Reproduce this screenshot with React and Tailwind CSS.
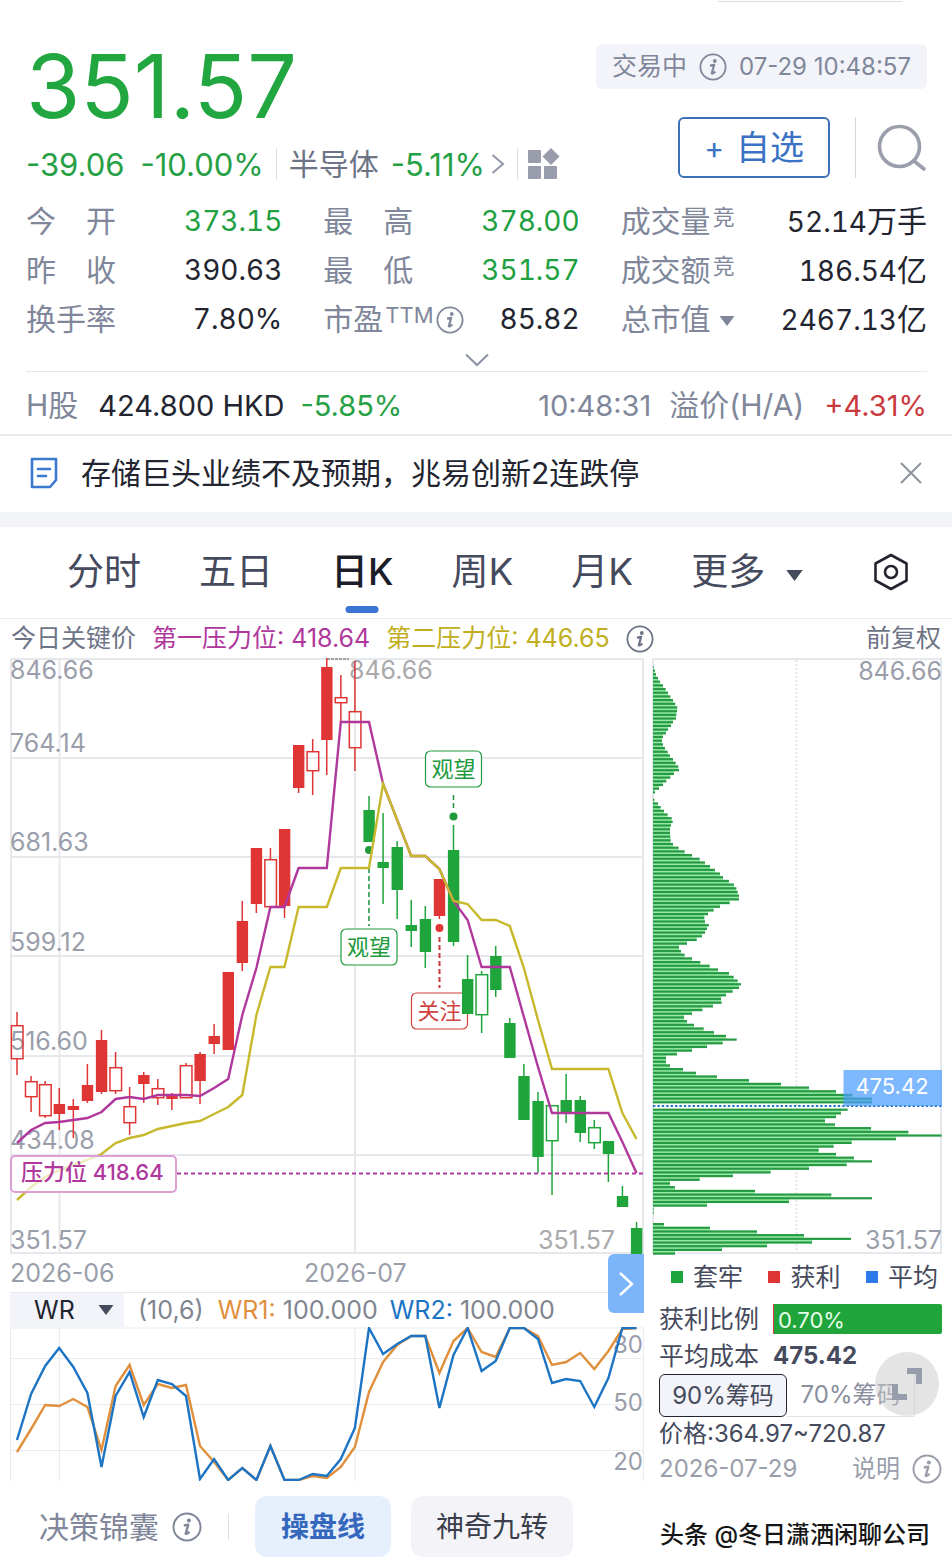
import React, { useState } from 'react';

const GREEN = '#20a53c';
const RED = '#e03535';
const PURPLE = '#b0389c';
const YELLOW = '#c8b82c';

const tabs = ['分时', '五日', '日K', '周K', '月K'];

// [high, body top, body bottom, low, type]  R/G = filled, r/g = hollow
const candles = [
  [1012, 1025, 1059, 1075, 'r'], [1076, 1081, 1097, 1112, 'r'], [1081, 1084, 1116, 1118, 'r'],
  [1088, 1104, 1114, 1130, 'R'], [1099, 1106, 1110, 1138, 'R'], [1064, 1085, 1101, 1103, 'R'],
  [1030, 1040, 1092, 1094, 'R'], [1052, 1067, 1091, 1094, 'r'], [1087, 1106, 1123, 1135, 'r'],
  [1072, 1075, 1084, 1103, 'R'], [1079, 1088, 1098, 1105, 'r'], [1093, 1095, 1099, 1110, 'R'],
  [1063, 1065, 1098, 1098, 'r'], [1052, 1054, 1081, 1104, 'R'], [1024, 1036, 1044, 1054, 'R'],
  [972, 972, 1050, 1050, 'R'], [901, 921, 963, 971, 'R'], [848, 848, 904, 913, 'R'],
  [848, 859, 907, 907, 'r'], [829, 829, 906, 918, 'R'], [745, 745, 788, 793, 'R'],
  [739, 751, 771, 795, 'r'], [658, 667, 740, 775, 'R'], [675, 697, 703, 723, 'r'],
  [661, 711, 748, 771, 'r'], [796, 810, 842, 842, 'G'], [813, 862, 868, 904, 'G'],
  [841, 847, 890, 919, 'G'], [900, 925, 931, 947, 'G'], [906, 919, 952, 968, 'G'],
  [879, 879, 916, 919, 'R'], [825, 850, 942, 946, 'G'], [955, 979, 1014, 1014, 'G'],
  [971, 974, 1015, 1033, 'g'], [946, 956, 990, 997, 'G'], [1018, 1023, 1058, 1058, 'G'],
  [1064, 1076, 1120, 1120, 'G'], [1092, 1101, 1157, 1173, 'G'], [1105, 1105, 1141, 1195, 'g'],
  [1074, 1100, 1112, 1123, 'G'], [1096, 1100, 1133, 1142, 'G'], [1120, 1127, 1143, 1149, 'g'],
  [1141, 1141, 1154, 1182, 'G'], [1186, 1196, 1207, 1207, 'G'], [1222, 1228, 1254, 1254, 'G'],
];

const firstLine = [
  1143, 1130, 1123, 1122, 1120, 1118, 1112, 1099, 1097, 1099, 1095, 1095, 1095, 1096, 1088, 1079,
  1015, 968, 907, 907, 868, 868, 868, 722, 722, 722, 784, 820, 856, 856, 869, 901, 920, 967, 967,
  967, 1017, 1067, 1113, 1113, 1113, 1113, 1113, 1142, 1173,
];
const secondLine = [
  1200, 1187, 1177, 1170, 1165, 1160, 1154, 1143, 1138, 1135, 1129, 1126, 1123, 1121, 1114, 1107,
  1095, 1015, 967, 967, 907, 907, 907, 868, 868, 868, 784, 820, 856, 856, 869, 901, 904, 920, 920,
  926, 968, 1020, 1069, 1069, 1069, 1069, 1069, 1113, 1139,
];

const wr1 = [
  1452, 1429, 1405, 1406, 1399, 1407, 1450, 1386, 1365, 1405, 1384, 1388, 1385, 1446, 1462, 1480,
  1468, 1480, 1446, 1480, 1480, 1476, 1478, 1467, 1447, 1392, 1362, 1345, 1336, 1336, 1373, 1341,
  1328, 1352, 1357, 1328, 1328, 1336, 1365, 1362, 1353, 1369, 1351, 1329, 1328,
];
const wr2 = [
  1440, 1394, 1366, 1348, 1367, 1393, 1467, 1396, 1372, 1417, 1380, 1384, 1396, 1479, 1459, 1480,
  1468, 1480, 1446, 1480, 1480, 1474, 1476, 1459, 1428, 1328, 1354, 1344, 1336, 1336, 1408, 1355,
  1328, 1371, 1361, 1328, 1328, 1339, 1383, 1379, 1381, 1407, 1378, 1328, 1328,
];

// chip distribution, one bar per price step, in thirds of a pixel
const chips = [
  2, 6, 9, 15, 21, 30, 38, 45, 52, 60, 67, 73, 72, 70, 69, 60, 54, 45, 39, 30, 27, 30, 36, 44, 51,
  60, 68, 76, 78, 63, 52, 40, 30, 18, 6, 0, 4, 15, 23, 33, 44, 56, 59, 54, 51, 51, 52, 53, 60, 77,
  95, 117, 140, 156, 171, 186, 201, 210, 228, 243, 250, 254, 258, 258, 230, 201, 182, 165, 154, 156,
  168, 162, 156, 147, 131, 102, 78, 84, 95, 117, 142, 170, 195, 228, 242, 254, 264, 258, 239, 219,
  204, 206, 180, 148, 117, 93, 102, 123, 152, 183, 219, 251, 209, 162, 117, 72, 39, 39, 51, 90, 129,
  192, 288, 384, 468, 549, 598, 657, 657, 0, 584, 564, 549, 516, 546, 654, 766, 866, 729, 596, 542,
  497, 549, 603, 657, 581, 468, 353, 240, 140, 51, 66, 306, 535, 657, 408, 162, 2, 2, 0, 0, 33, 171,
  312, 453, 594, 477, 342, 207, 66,
];

const xAt = (i) => 17 + i * 14.08;
const toPoints = (values) => values.map((y, i) => `${xAt(i).toFixed(1)},${y}`).join(' ');

const InfoIcon = ({ size = 'size-7' }) => (
  <svg viewBox="0 0 28 28" className={`${size} shrink-0`} fill="none" stroke="currentColor" aria-hidden="true">
    <circle cx="14" cy="14" r="12.6" strokeWidth="1.8" />
    <circle cx="15.8" cy="8" r="1.9" fill="currentColor" stroke="none" />
    <path d="M11 12.6 L15.2 11.8 L12.8 20.2 Q13.2 21 16.4 18.6" strokeWidth="2.2" strokeLinejoin="round" />
  </svg>
);

const Caret = ({ className }) => (
  <svg viewBox="0 0 16 10" className={className} fill="currentColor" aria-hidden="true">
    <path d="M0.5 0h15L8 10z" />
  </svg>
);

const Stat = ({ label, spread, sup, info, caret, value, unit, green }) => (
  <div className="flex h-[49px] items-center justify-between">
    <dt className="flex items-center text-[30px] text-[#80879a]">
      {spread ? (
        <span className="flex w-[90px] justify-between">
          <span>{label[0]}</span>
          <span>{label[1]}</span>
        </span>
      ) : (
        <span>{label}</span>
      )}
      {sup && <span className="pb-2 pl-0.5 text-[22px] proportional-nums">{sup}</span>}
      {info && <span className="ml-0.5 pt-0.5"><InfoIcon /></span>}
      {caret && (
        <button aria-label="切换市值" className="ml-2 pt-1">
          <Caret className="h-3 w-4" />
        </button>
      )}
    </dt>
    <dd className={`text-[28px] ${green ? 'text-[#20a040]' : 'text-[#22252f]'}`}>
      {value}
      {unit && <span className="text-[30px]">{unit}</span>}
    </dd>
  </div>
);

const Header = () => (
  <header className="pr-[25px] pl-[26px]">
    <div className="mr-6 ml-auto h-0.5 w-[186px] rounded-b-full border-b border-[#dcdde2]" />
    <div className="flex items-start justify-between pt-[42px]">
      <div>
        <p className="text-[88px] leading-[84px] text-[#22a63f]">351.57</p>
        <div className="mt-4 flex h-10 items-center text-[31px] text-[#26a045]">
          <span>-39.06</span>
          <span className="ml-4">-10.00%</span>
          <span className="mx-3 h-8 w-px bg-[#dcdfe6]" />
          <a href="#sector" className="flex items-center">
            <span className="text-[30px] text-[#6d7486]">半导体</span>
            <span className="ml-3">-5.11%</span>
            <svg viewBox="0 0 14 24" className="ml-1.5 h-6 w-3.5" fill="none" stroke="#9398a8" strokeWidth="2">
              <path d="M1.5 3 L12 12 L1.5 21" />
            </svg>
          </a>
          <span className="mr-2.5 ml-3 h-8 w-px bg-[#dcdfe6]" />
          <button aria-label="板块">
            <svg viewBox="0 0 32 32" className="size-8" fill="#989cab">
              <rect x="0" y="2" width="13" height="13" rx="1" />
              <rect x="0" y="18" width="13" height="13" rx="1" />
              <rect x="16" y="18" width="13" height="13" rx="1" />
              <path d="M23 0 L31.5 8.5 L23 17 L14.5 8.5z" />
            </svg>
          </button>
        </div>
      </div>
      <div className="flex flex-col items-end">
        <div className="flex h-[45px] items-center gap-3 rounded-md bg-[#f3f4f9] px-4 text-[24px] text-[#80879a]">
          <span className="text-[25px]">交易中</span>
          <InfoIcon />
          <span>07-29 10:48:57</span>
        </div>
        <div className="mt-7 flex items-center">
          <button className="flex h-[61px] items-center gap-3 rounded-md border-2 border-[#3d72b8] px-6 text-[34px] text-[#3a72c4]">
            <span className="text-[30px]">+</span>
            <span>自选</span>
          </button>
          <span className="mr-[21px] ml-[25px] h-[61px] w-px bg-[#d5d7dd]" />
          <button aria-label="搜索">
            <svg viewBox="0 0 50 48" className="h-12 w-[50px]" fill="none" stroke="#9b9eab" strokeWidth="3.6" strokeLinecap="round">
              <circle cx="22.5" cy="22.5" r="20" />
              <path d="M37 37 L47 45" />
            </svg>
          </button>
        </div>
      </div>
    </div>

    <dl className="mt-3 grid grid-cols-[256fr_256fr_306fr] gap-x-[41px] tabular-nums">
      <Stat label="今开" spread value="373.15" green />
      <Stat label="最高" spread value="378.00" green />
      <Stat label="成交量" sup="竞" value="52.14" unit="万手" />
      <Stat label="昨收" spread value="390.63" />
      <Stat label="最低" spread value="351.57" green />
      <Stat label="成交额" sup="竞" value="186.54" unit="亿" />
      <Stat label="换手率" value="7.80%" />
      <Stat label="市盈" sup="TTM" info value="85.82" />
      <Stat label="总市值" caret value="2467.13" unit="亿" />
    </dl>
    <button aria-label="展开" className="flex h-[29px] w-full items-end justify-center border-b border-[#e6e7eb] pb-1">
      <svg viewBox="0 0 24 14" className="h-3.5 w-6" fill="none" stroke="#8d92a2" strokeWidth="2">
        <path d="M1 1.5 L12 12 L23 1.5" />
      </svg>
    </button>
    <div className="flex h-[62px] items-center pt-1 text-[29px] text-[#80879a]">
      <span className="text-[30px]">H股</span>
      <span className="ml-5 text-[#22252f]">424.800 HKD</span>
      <span className="ml-4 text-[#26a045]">-5.85%</span>
      <span className="ml-auto">10:48:31</span>
      <span className="ml-[18px] text-[30px]">溢价(H/A)</span>
      <span className="ml-5 text-[#c93a3f]">+4.31%</span>
    </div>
  </header>
);

const NewsBar = () => (
  <div className="flex h-[78px] items-center border-t-2 border-[#e8e9ed] pr-7 pb-0.5 pl-[29px]">
    <svg viewBox="0 0 30 32" className="h-8 w-[30px]" fill="none" stroke="#3b78d0" strokeWidth="2.6" strokeLinecap="round">
      <path d="M3 2h24v21l-6 7H3z" strokeLinejoin="round" />
      <path d="M9 12h12M9 19h8" />
    </svg>
    <a href="#news" className="ml-[22px] text-[30px] text-[#22252f]">存储巨头业绩不及预期，兆易创新2连跌停</a>
    <button aria-label="关闭" className="ml-auto">
      <svg viewBox="0 0 26 26" className="size-[26px]" fill="none" stroke="#8f93a0" strokeWidth="2">
        <path d="M3 3l20 20M23 3L3 23" />
      </svg>
    </button>
  </div>
);

const TabBar = () => {
  const [active, setActive] = useState('日K');
  return (
    <nav className="flex h-[92px] items-center border-b border-[#ececf0] pr-[43px] pb-0.5 pl-[67px] text-[37px] text-[#454a5c]">
      <div className="flex items-center gap-[58px]">
        {tabs.map((tab) => (
          <button
            key={tab}
            onClick={() => setActive(tab)}
            className={`relative leading-[54px] ${tab === active ? 'font-medium text-[#1b1e28]' : ''}`}
          >
            {tab}
            {tab === active && (
              <span className="absolute -bottom-3.5 left-1/2 h-[7px] w-[33px] -translate-x-1/2 rounded-full bg-[#3b75d4]" />
            )}
          </button>
        ))}
        <button className="flex items-center gap-5 leading-[54px]">
          更多
          <Caret className="mt-2 h-[11px] w-[19px]" />
        </button>
      </div>
      <button aria-label="设置" className="ml-auto">
        <svg viewBox="0 0 36 38" className="h-[38px] w-9" fill="none" stroke="#22252f" strokeWidth="2.6" strokeLinejoin="round">
          <path d="M18 2 L33.5 10.5 V27.5 L18 36 L2.5 27.5 V10.5z" />
          <circle cx="18" cy="19" r="6" />
        </svg>
      </button>
    </nav>
  );
};

const Marker = ({ x, y, color, text }) => (
  <g>
    <rect x={x - 28} y={y - 18} width="56" height="36" rx="5" fill="#fff" stroke={color} strokeWidth="1.2" />
    <text x={x} y={y + 8} fontSize="22" textAnchor="middle" fill={color}>{text}</text>
  </g>
);

const Candle = ({ data, index }) => {
  const [high, top, bottom, low, type] = data;
  const color = type.toLowerCase() === 'r' ? RED : GREEN;
  const hollow = type === 'r' || type === 'g';
  const x = xAt(index);
  return (
    <g stroke={color} strokeWidth="1.5">
      <path d={`M${x} ${high}V${top}M${x} ${bottom}V${low}`} />
      {hollow ? (
        <rect x={x - 5.6} y={top + 0.7} width="11.6" height={bottom - top - 1} fill="none" />
      ) : (
        <rect x={x - 5.6} y={top} width="11.4" height={bottom - top} fill={color} stroke="none" />
      )}
    </g>
  );
};

const KLineChart = () => (
  <svg viewBox="10 658 634 596" className="block h-auto w-full overflow-visible" role="img" aria-label="日K线">
    <g stroke="#e7e8eb" strokeWidth="2" fill="none">
      <rect x="11" y="659" width="632" height="594" />
      <path d="M11 758H643M11 857H643M11 956H643M11 1056H643M11 1155H643M59.5 659V1253M355 659V1253" />
    </g>
    <g fontSize="25" fill="#9a9eaa">
      <text x="10" y="679">846.66</text>
      <text x="10" y="752">764.14</text>
      <text x="10" y="851">681.63</text>
      <text x="10" y="951">599.12</text>
      <text x="10" y="1050">516.60</text>
      <text x="10" y="1149">434.08</text>
      <text x="10" y="1249">351.57</text>
      <text x="349" y="679" fill="#a9a9ab">846.66</text>
      <text x="615" y="1249" textAnchor="end" fill="#a9a9ab">351.57</text>
    </g>
    <path d="M327 659H349" stroke="#888" strokeWidth="1.5" strokeDasharray="3 1" />
    <Marker x={439.5} y={1011} color="#d0413f" text="关注" />
    {candles.map((c, i) => (
      <Candle key={i} data={c} index={i} />
    ))}
    <g strokeWidth="1.6" strokeDasharray="5 3">
      <path d="M369 868V926" stroke="#2b9348" />
      <path d="M453.5 795V808" stroke="#2b9348" />
      <path d="M439.5 937V988" stroke="#c93a3f" strokeWidth="2" />
    </g>
    <circle cx="369" cy="850" r="4" fill="#219a3d" />
    <circle cx="453.5" cy="816.5" r="4" fill="#219a3d" />
    <circle cx="439.5" cy="928" r="4" fill={RED} />
    <Marker x={369} y={947} color="#219a3d" text="观望" />
    <Marker x={453.5} y={769} color="#219a3d" text="观望" />
    <polyline points={toPoints(firstLine)} fill="none" stroke={PURPLE} strokeWidth="2.4" />
    <polyline points={toPoints(secondLine)} fill="none" stroke={YELLOW} strokeWidth="2.4" />
    <path d="M177 1173.5H643" stroke={PURPLE} strokeWidth="2" strokeDasharray="4 3" />
    <rect x="11" y="1156" width="165" height="36" rx="4" fill="#fff" fillOpacity="0.7" stroke="#dd9ed3" strokeWidth="2" />
    <text x="21" y="1180" fontSize="22" fontWeight="500" fill={PURPLE}>压力位 418.64</text>
  </svg>
);

const ChipChart = () => (
  <svg viewBox="652 658 290 596" className="block h-auto w-full overflow-visible" role="img" aria-label="筹码分布">
    <rect x="653" y="659" width="288" height="594" fill="none" stroke="#e7e8eb" strokeWidth="2" />
    <path d="M796.5 660V1253" stroke="#dddee3" strokeWidth="1.6" strokeDasharray="2 2" />
    {chips.map((w, i) => (
      <g key={i}>
        <rect x="653" y={667.6 + i * 3.69} width={Math.min(w, chips[i + 1] || 0) / 3} height="2.6" fill="#96e9a6" />
        <rect x="653" y={665.8 + i * 3.69} width={w / 3} height="2.2" fill="#259a43" />
      </g>
    ))}
    <path d="M653 1106H942" stroke="#2476c8" strokeWidth="2" strokeDasharray="2.4 2" />
    <rect x="843.5" y="1070" width="98.5" height="36" fill="#4c9cff" fillOpacity="0.72" />
    <text x="892" y="1094" fontSize="22" textAnchor="middle" fill="#fff">475.42</text>
    <g fontSize="25" fill="#9a9eaa" textAnchor="end">
      <text x="942" y="680">846.66</text>
      <text x="942" y="1249">351.57</text>
    </g>
  </svg>
);

const WrChart = () => (
  <svg viewBox="10 1327 634 154" className="block h-auto w-full" role="img" aria-label="WR">
    <path
      d="M10.5 1481V1328H643.5V1481M11 1358.5H643M11 1404.5H643M11 1450.5H643M59.5 1328V1481M355 1328V1481"
      fill="none"
      stroke="#eaebee"
      strokeWidth="1.2"
    />
    <g fontSize="24" fill="#9a9eaa" textAnchor="end">
      <text x="643" y="1353">80</text>
      <text x="643" y="1411">50</text>
      <text x="643" y="1470">20</text>
    </g>
    <polyline points={toPoints(wr1)} fill="none" stroke="#e0903c" strokeWidth="2.4" />
    <polyline points={toPoints(wr2)} fill="none" stroke="#1c74c4" strokeWidth="2.4" />
  </svg>
);

const LeftPanel = () => (
  <div className="min-w-0 flex-[634]">
    <KLineChart />
    <div className="relative flex h-[38px] items-center text-[25px] text-[#9a9eaa]">
      <span className="flex-[294]">2026-06</span>
      <span className="flex-[340]">2026-07</span>
      <button aria-label="下一页" className="absolute top-0 right-0 flex h-[59px] w-9 items-center justify-center rounded-l-md bg-[#7db5fb]">
        <svg viewBox="0 0 16 26" className="h-[26px] w-4" fill="none" stroke="#fff" strokeWidth="2.4">
          <path d="M2 2 L14 13 L2 24" />
        </svg>
      </button>
    </div>
    <div className="flex h-[35px] items-center border-t border-[#e7e8eb] text-[25px] text-[#80858f]">
      <label className="relative flex h-full w-[114px] items-center bg-[#f3f4f9] text-[#22252f]">
        <select aria-label="指标" className="h-full w-full appearance-none pl-6">
          <option>WR</option>
        </select>
        <Caret className="pointer-events-none absolute right-2.5 h-2.5 w-4 text-[#454a5c]" />
      </label>
      <span className="ml-[14px]">(10,6)</span>
      <span className="ml-[14px]"><span className="text-[#e0903c]">WR1:</span> 100.000</span>
      <span className="ml-3"><span className="text-[#1c74c4]">WR2:</span> 100.000</span>
    </div>
    <WrChart />
  </div>
);

const RightPanel = () => (
  <div className="min-w-0 flex-[290] text-[25px] text-[#454a5c]">
    <ChipChart />
    <div className="flex h-[46px] items-center justify-between pr-1 pl-[19px]">
      <span className="flex items-center gap-2.5"><i className="size-3 bg-[#20a53c]" />套牢</span>
      <span className="flex items-center gap-2.5"><i className="size-3 bg-[#e03535]" />获利</span>
      <span className="flex items-center gap-2.5"><i className="size-3 bg-[#2f7aea]" />平均</span>
    </div>
    <div className="relative pl-[7px]">
      <div className="mt-1 flex h-[30px] items-center gap-[14px]">
        <span>获利比例</span>
        <span className="flex h-[30px] flex-1 items-center rounded-r-xs border-l border-[#e03535] bg-[#20a53c] pt-0.5 pl-1 text-[22px] text-[#e6ffe9]">0.70%</span>
      </div>
      <div className="mt-1 flex h-9 items-center gap-[14px]">
        <span>平均成本</span>
        <span className="text-[24px] font-bold">475.42</span>
      </div>
      <div className="flex h-[43px]">
        <button className="w-32 rounded-md border border-[#22252f] bg-[#f3f4f9] text-[24px]">90%筹码</button>
        <button className="w-32 border-r border-b border-[#e2e3e8] text-[24px] text-[#8a8f9e]">70%筹码</button>
      </div>
      <p className="flex h-8 items-center pt-0.5 text-[24px]">价格:364.97~720.87</p>
      <div className="mt-1 flex h-8 items-center justify-between text-[24px] text-[#9a9eaa]">
        <span>2026-07-29</span>
        <button className="flex items-center gap-3">
          说明
          <InfoIcon size="size-[30px]" />
        </button>
      </div>
      <button aria-label="全屏" className="absolute top-12 right-[3px] size-16 rounded-full bg-[#c9c9cb]/50">
        <svg viewBox="0 0 64 64" className="size-full" fill="none" stroke="#989dae" strokeWidth="6">
          <path d="M32 19H44V32M20 32V45H32" />
        </svg>
      </button>
    </div>
  </div>
);

const Footer = () => (
  <footer className="mt-[11px] flex h-[61px] items-center pr-[22px] pl-[39px]">
    <button className="flex items-center gap-[13px] text-[30px] text-[#80879a]">
      决策锦囊
      <InfoIcon size="size-[30px]" />
    </button>
    <span className="mx-[26px] h-[26px] w-px bg-[#dcdfe6]" />
    <button className="h-full rounded-xl bg-[#e6effc] px-[26px] text-[28px] font-bold text-[#3568bd]">操盘线</button>
    <button className="ml-5 h-full rounded-xl bg-[#f4f4f8] px-[25px] text-[28px] text-[#3a3e4d]">神奇九转</button>
    <span className="ml-auto pt-4 text-[24px] font-medium text-[#151515]">头条 @冬日潇洒闲聊公司</span>
  </footer>
);

const App = () => (
  <div className="bg-white pb-2.5 font-[family-name:Inter,'Noto_Sans_CJK_SC',sans-serif] leading-none whitespace-nowrap">
    <Header />
    <NewsBar />
    <div className="h-[15px] bg-[#f3f4f8]" />
    <TabBar />
    <div className="flex h-[39px] items-center gap-4 px-[11px] text-[25px] text-[#6d7486]">
      <span>今日关键价</span>
      <span className="text-[#b0389c]">第一压力位: 418.64</span>
      <span className="text-[#c0ae20]">第二压力位: 446.65</span>
      <InfoIcon />
      <span className="ml-auto">前复权</span>
    </div>
    <main className="flex gap-2 px-2.5">
      <LeftPanel />
      <RightPanel />
    </main>
    <Footer />
  </div>
);

export default App;
